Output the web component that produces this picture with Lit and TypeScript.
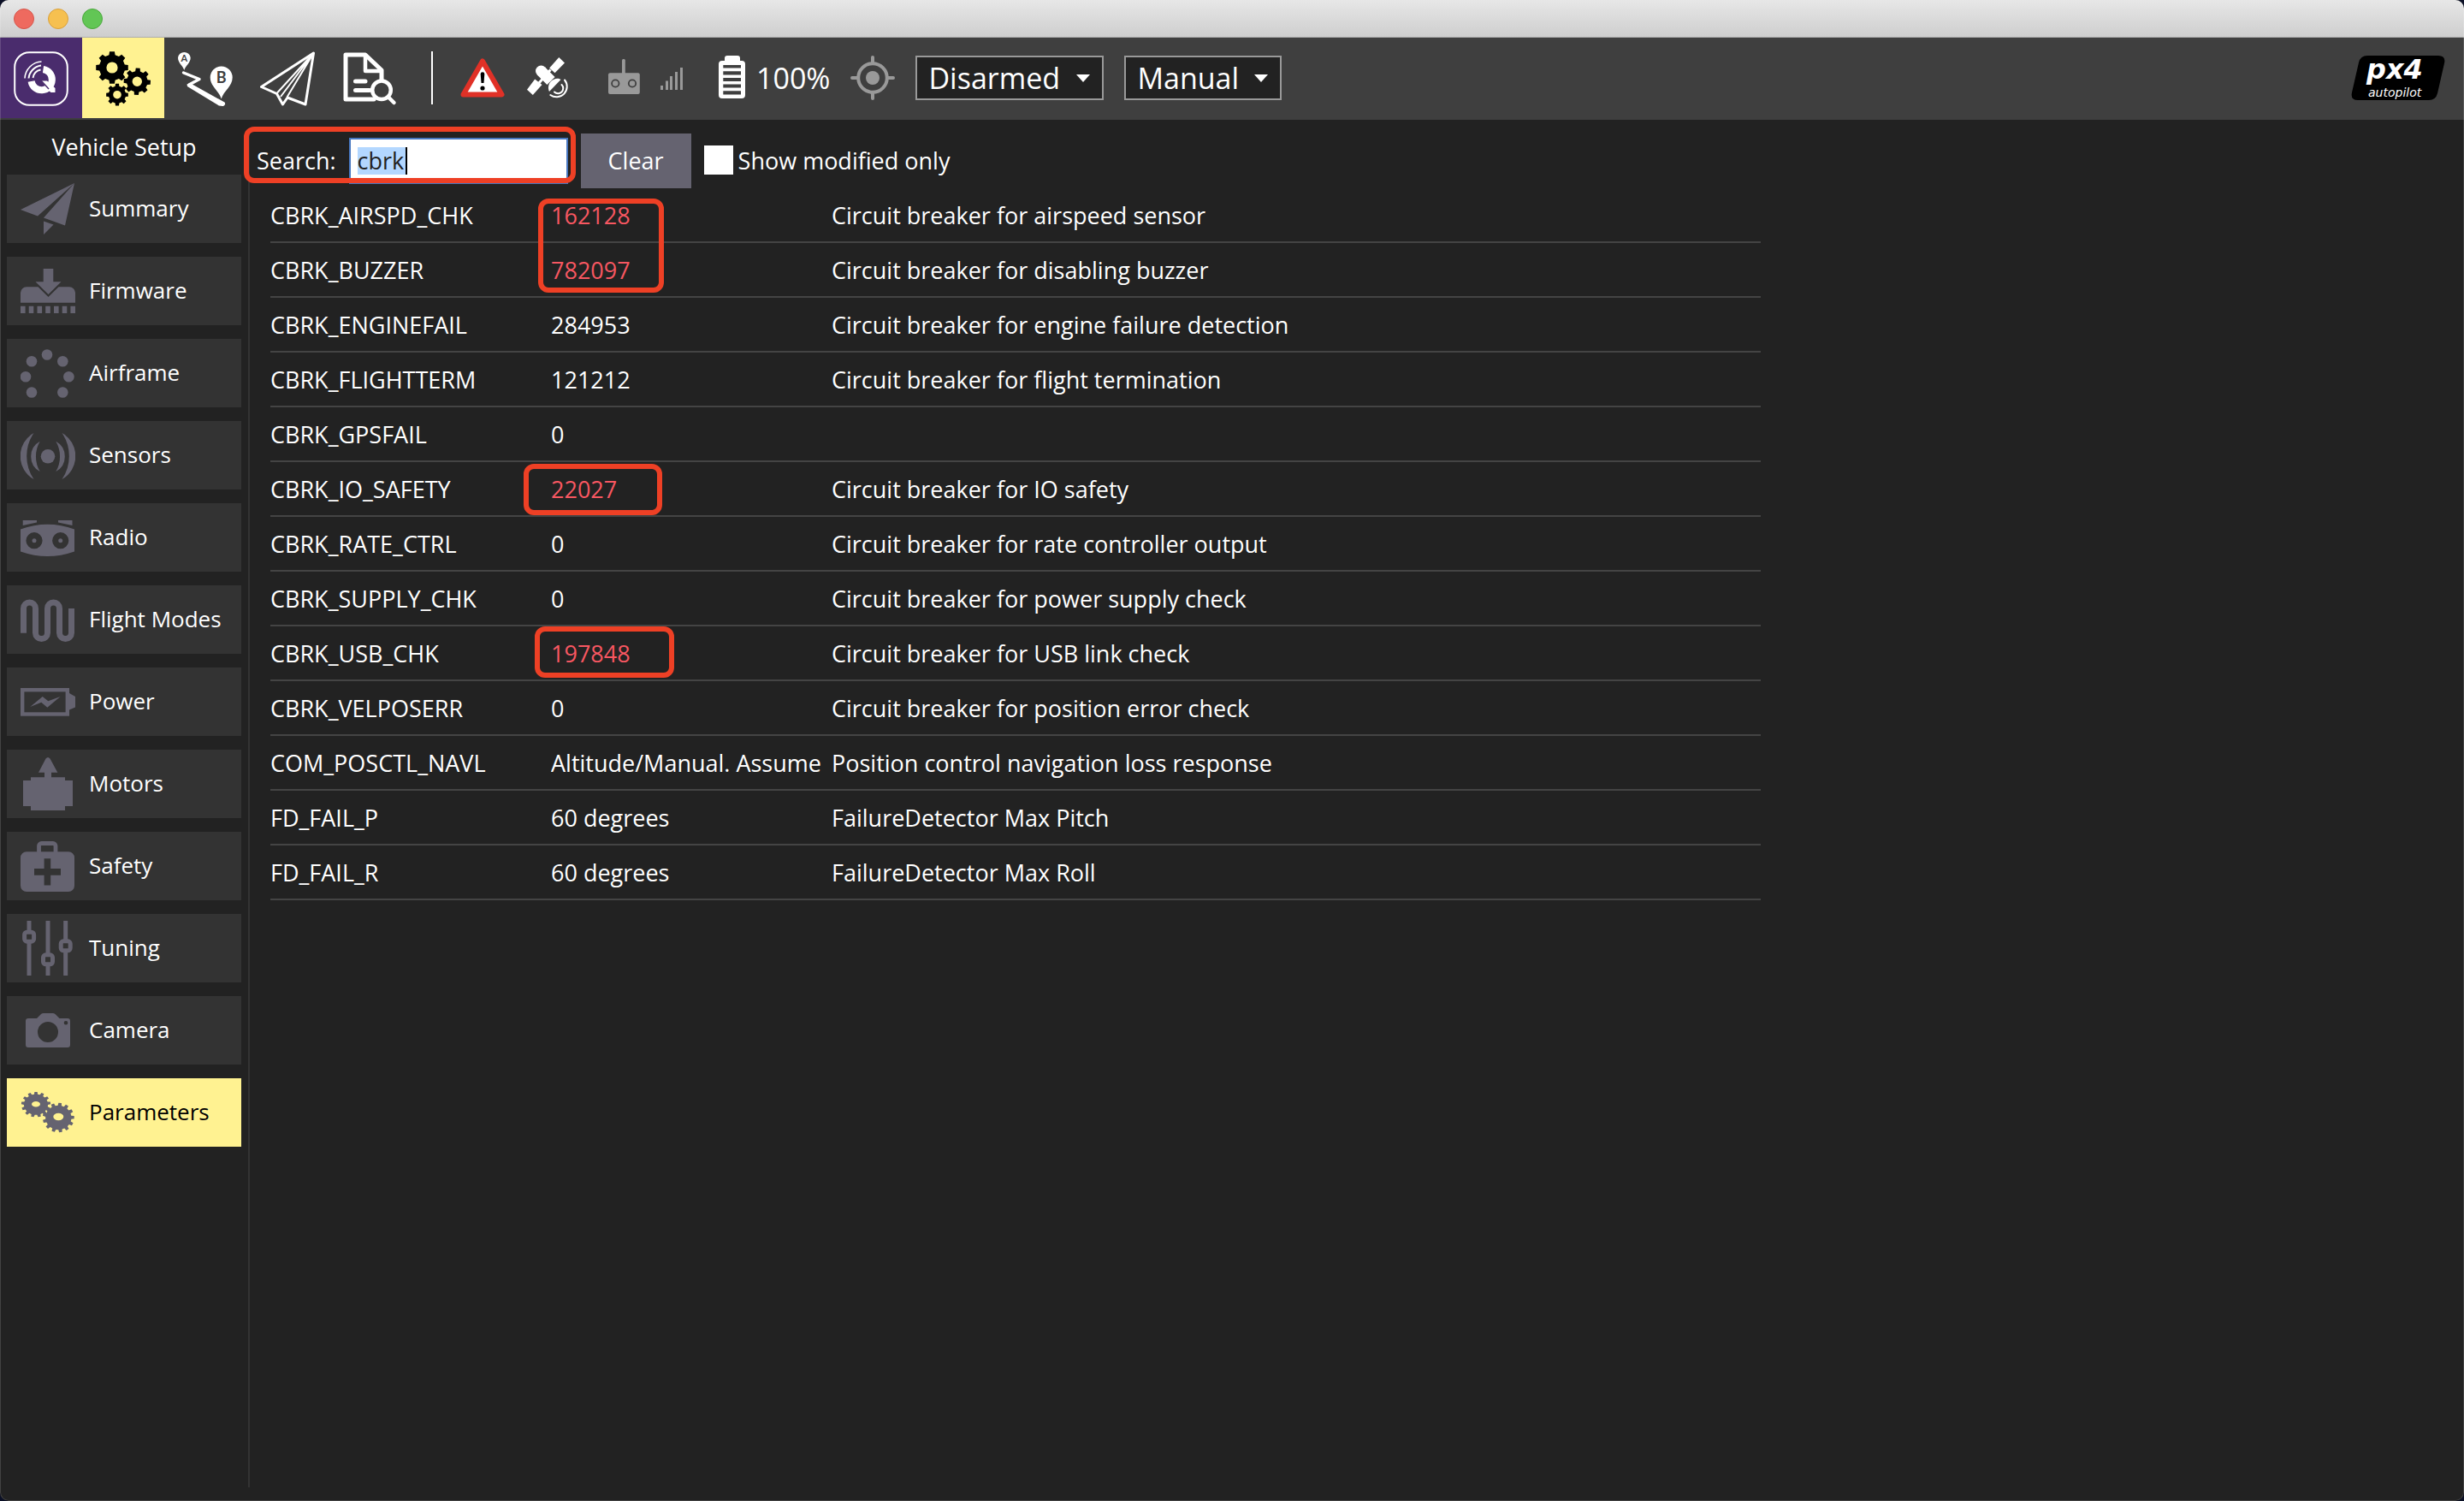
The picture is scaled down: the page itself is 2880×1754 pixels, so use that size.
import { LitElement, html, svg, css, nothing } from "lit";
import type { SVGTemplateResult } from "lit";
import { customElement, property, state } from "lit/decorators.js";
import { classMap } from "lit/directives/class-map.js";

interface Param {
  name: string;
  value: string;
  text: string;
  changed?: boolean;
}

const PARAMS: Param[] = [
  { name: "CBRK_AIRSPD_CHK", value: "162128", text: "Circuit breaker for airspeed sensor", changed: true },
  { name: "CBRK_BUZZER", value: "782097", text: "Circuit breaker for disabling buzzer", changed: true },
  { name: "CBRK_ENGINEFAIL", value: "284953", text: "Circuit breaker for engine failure detection" },
  { name: "CBRK_FLIGHTTERM", value: "121212", text: "Circuit breaker for flight termination" },
  { name: "CBRK_GPSFAIL", value: "0", text: "" },
  { name: "CBRK_IO_SAFETY", value: "22027", text: "Circuit breaker for IO safety", changed: true },
  { name: "CBRK_RATE_CTRL", value: "0", text: "Circuit breaker for rate controller output" },
  { name: "CBRK_SUPPLY_CHK", value: "0", text: "Circuit breaker for power supply check" },
  { name: "CBRK_USB_CHK", value: "197848", text: "Circuit breaker for USB link check", changed: true },
  { name: "CBRK_VELPOSERR", value: "0", text: "Circuit breaker for position error check" },
  { name: "COM_POSCTL_NAVL", value: "Altitude/Manual. Assume", text: "Position control navigation loss response" },
  { name: "FD_FAIL_P", value: "60 degrees", text: "FailureDetector Max Pitch" },
  { name: "FD_FAIL_R", value: "60 degrees", text: "FailureDetector Max Roll" },
];

/** Outline of a cog wheel: flat-topped teeth round an elliptical body. */
function cog(cx: number, cy: number, rx: number, ry: number, teeth: number, root: number, turn = 0): string {
  const pts: string[] = [];
  const step = (Math.PI * 2) / teeth;
  const corners: [number, number][] = [
    [-0.3, root],
    [-0.2, 1],
    [0.2, 1],
    [0.3, root],
  ];
  for (let i = 0; i < teeth; i++) {
    for (const [offset, r] of corners) {
      const a = (i + offset) * step + turn;
      pts.push(`${(cx + rx * r * Math.sin(a)).toFixed(2)} ${(cy - ry * r * Math.cos(a)).toFixed(2)}`);
    }
  }
  return `M${pts.join("L")}Z`;
}

/** Ellipse as a path segment, so that it can be cut out of a filled shape. */
function hole(cx: number, cy: number, rx: number, ry = rx): string {
  return `M${cx - rx} ${cy}a${rx} ${ry} 0 1 0 ${2 * rx} 0a${rx} ${ry} 0 1 0 ${-2 * rx} 0Z`;
}

const ICONS: Record<string, SVGTemplateResult> = {
  qgc: svg`
    <rect x="1.2" y="1.2" width="61.6" height="61.6" rx="17" fill="none" stroke="#fff" stroke-width="2"/>
    <g fill="none" stroke="#fff">
      <path d="M34.500 21A12.200 12.200 0 1 1 20.600 35" stroke-width="8"/>
      <path d="M22.500 31A11.500 11.500 0 0 1 31.500 21.500" stroke-width="1.800"/>
      <path d="M17.500 31.500A17 17 0 0 1 32 16.500" stroke-width="2"/>
      <path d="M13 31.500A20.500 20.500 0 0 1 32.500 12" stroke-width="1.600"/>
    </g>
    <path d="M32.500 34.500H39L48.500 43V48H43.500L40.500 45.500Z" fill="#fff"/>
    <path d="M31.500 33.500L41 44" stroke="#4a2c6d" stroke-width="1.500"/>`,
  setup: svg`
    <path fill-rule="evenodd" d="${cog(19, 19, 19, 19, 8, 0.8) + hole(19, 19, 6.6)}"/>
    <path fill-rule="evenodd" d="${cog(48.3, 35.3, 15.8, 15.8, 8, 0.78, 0.06) + hole(48.3, 35.3, 5.7)}"/>
    <path fill-rule="evenodd" d="${cog(25, 50.7, 13, 13, 8, 0.78) + hole(25, 50.7, 4.8)}"/>`,
  plan: svg`
    <path d="M7.300 22C6 17 0 13.500 0 7.500A7.400 7.400 0 0 1 14.700 7.500C14.700 13.500 8.600 17 7.300 22Z"/>
    <path d="M50.700 55.500C48 46 37.700 41 37.700 30.500A13 13 0 0 1 63.700 30.500C63.700 41 53.400 46 50.700 55.500Z"/>
    <path d="M6.500 25L25 32.500L13 39" fill="none" stroke="#fff" stroke-width="3.400" stroke-linejoin="round" stroke-linecap="round"/>
    <path d="M10.500 38.500L14 37L54.500 59.500A2.800 2.800 0 0 1 52 64L48 63.600L11 41Z"/>
    <text class="pin" x="7.300" y="11.500" font-size="11">A</text>
    <text class="pin" x="50.700" y="37" font-size="18">B</text>`,
  fly: svg`
    <g fill="none" stroke="#fff" stroke-linejoin="round">
      <path stroke-width="3" d="M1.500 41.500L62.500 2L53 62L32 54L26.500 62L19.500 49.500Z"/>
      <path stroke-width="2" d="M62.500 2L20 48.500M62.500 2L24 53M62.500 2L31.500 53.500"/>
    </g>`,
  analyze: svg`
    <g fill="none" stroke="#fff" stroke-linejoin="round" stroke-linecap="round">
      <path stroke-width="5" d="M46 33V22L27 4H4V56H37"/>
      <path stroke-width="4.500" d="M27 5V23H45"/>
      <path stroke-width="5" d="M15.500 35H27M15.500 45.500H32"/>
      <circle stroke-width="4.500" cx="46" cy="45.300" r="10.800"/>
      <path stroke-width="4.500" d="M54 53.500L60.500 60"/>
    </g>`,
  warning: svg`
    <path d="M26 6.500L48.500 45.500H3.500Z" fill="#fff" stroke="#e03127" stroke-width="6" stroke-linejoin="round"/>
    <path d="M23.700 21.500Q23.700 19.300 26 19.300T28.300 21.500L27.500 32H24.500Z" fill="#000"/>
    <circle cx="26" cy="38" r="2.600" fill="#000"/>`,
  satellite: svg`
    <path d="M39.300 2L46 8.500L34.500 20.200L28.200 14.500Z"/>
    <path d="M11.200 27.500L19.500 34L8.800 46L2 39.700Z"/>
    <path d="M29.500 16.500L16 32" stroke="#fff" stroke-width="3"/>
    <path d="M18.500 18L30 29.500" stroke="#fff" stroke-width="13"/>
    <circle cx="18.500" cy="18" r="6.500"/>
    <path d="M41.500 28C38 25.500 33 27 30 30C27 33 26 38 28 42Z"/>
    <g fill="none" stroke="#fff" stroke-width="2" stroke-linecap="round">
      <path d="M42.500 34A6 6 0 0 1 34 42.500"/>
      <path d="M46 28.500A12.200 12.200 0 0 1 29.300 46"/>
    </g>`,
  rc: svg`
    <rect x="17" y="4" width="3.800" height="18" rx="1.500"/>
    <rect x="1" y="20.200" width="36.800" height="24.800" rx="2"/>
    <g fill="none" stroke="#3f3f3f" stroke-width="1.800"><circle cx="9.300" cy="32.500" r="4.200"/><circle cx="29" cy="32.500" r="4.200"/></g>`,
  signal: svg`<path d="M0 35h3v5h-3zM6 29.500h3v10.500h-3zM11 24h3v16h-3zM17 19h3v21h-3zM23 14h3v26h-3z"/>`,
  battery: svg`
    <path fill-rule="evenodd" d="M9 6V3A3 3 0 0 1 12 0H24A3 3 0 0 1 27 3V6H29A4 4 0 0 1 33 10V46A4 4 0 0 1 29 50H6A4 4 0 0 1 2 46V10A4 4 0 0 1 6 6Z
      M7.300 11V14.500H28V11ZM7.300 18.200V22.400H28V18.200ZM7.300 26V30H28V26ZM7.300 33.600V37.600H28V33.600ZM7.300 41.200V45.400H28V41.200Z"/>`,
  gps: svg`
    <circle cx="26" cy="26" r="16.800" fill="none" stroke="#999" stroke-width="4"/>
    <circle cx="26" cy="26" r="8"/>
    <path d="M26 2V9M26 43V50M2 26H9M43 26H50" stroke="#999" stroke-width="4" stroke-linecap="round"/>`,
  summary: svg`<path d="M0 33L63 2L20 40.500ZM63 2L52 51.500L27 42.500ZM27 46.500L38.500 50.500L27 62Z"/>`,
  firmware: svg`
    <path d="M26.700 6H38.300V21.300H47.500L32.500 36L17.500 21.300H26.700Z"/>
    <path d="M0 45.700V34A7 7 0 0 1 7 27.300H20.500L32.500 39L44.500 27.300H57A7 7 0 0 1 64 34V45.700Z"/>
    <path d="M2.800 49.700V58M12.500 49.700V58M22.300 49.700V58M32 49.700V58M41.800 49.700V58M51.500 49.700V58M61.200 49.700V58" stroke="#656370" stroke-width="5.600"/>`,
  airframe: svg`${[
    [31, 10.5], [13, 18.3], [49.3, 18.3], [6, 36.3], [56.4, 36.3], [13, 54.5], [49.3, 54.5],
  ].map(([x, y]) => svg`<circle cx="${x}" cy="${y}" r="6.300"/>`)}`,
  sensors: svg`
    <circle cx="32" cy="33.300" r="8.300"/>
    <path d="M15.500 6A31 31 0 0 0 15.500 60A48 48 0 0 1 15.500 6ZM22.700 15.800A20 20 0 0 0 22.700 51A35 35 0 0 1 22.700 15.800Z"/>
    <path d="M48.500 6A31 31 0 0 1 48.500 60A48 48 0 0 0 48.500 6ZM41.300 15.800A20 20 0 0 1 41.300 51A35 35 0 0 0 41.300 15.800Z"/>`,
  radio: svg`
    <path d="M2.700 12H19V14.500L2.700 18ZM60.500 12H44V14.500L60.500 18Z"/>
    <path fill-rule="evenodd" d="${"M0 22.500Q31.500 11 63 22.500V48.500Q31.500 59.500 0 48.500Z" + hole(16, 35.7, 9.6) + hole(46.7, 35.7, 9.6)}"/>
    <circle cx="16" cy="35.700" r="2.500"/><circle cx="46.700" cy="35.700" r="2.500"/>`,
  modes: svg`<path fill="none" stroke="#656370" stroke-width="7" d="M3.500 47.800V19a7 7 0 0 1 14 0V47.500a7 7 0 0 0 14 0V19a7 7 0 0 1 14 0V47.500a7 7 0 0 0 14 0V19"/>`,
  power: svg`
    <rect x="2.200" y="18.200" width="52.600" height="28.300" fill="none" stroke="#656370" stroke-width="4.400"/>
    <path d="M57 22L64 26V38.500L57 41.500ZM11.300 38L25.700 26L32.300 31.300L46.500 26L31.300 38.700L24.300 32.700Z"/>`,
  motors: svg`<path d="M29.500 2.500Q32 -.5 34.500 2.500L43.300 18.700H36V24.300H52V28H61V58H52V63H12V58H3V28H12V24.300H28V18.700H21Z"/>`,
  safety: svg`
    <path d="M21.500 17V8.500A3 3 0 0 1 24.500 5.500H38A3 3 0 0 1 41 8.500V17" fill="none" stroke="#656370" stroke-width="4.800"/>
    <path fill-rule="evenodd" d="M7 15.300H56A7 7 0 0 1 63 22.300V55A7 7 0 0 1 56 62H7A7 7 0 0 1 0 55V22.300A7 7 0 0 1 7 15.300Z
      M27.600 23.300V35H16V42.800H27.600V54.500H35.200V42.800H47V35H35.200V23.300Z"/>`,
  tuning: svg`
    <path d="M10 0V12M10 25V64M32 0V39M32 52V64M52.700 0V23M52.700 36V64" stroke="#656370" stroke-width="5"/>
    <g fill="none" stroke="#656370" stroke-width="5">
      <rect x="4.600" y="13.200" width="11" height="11" rx="3"/>
      <rect x="26.500" y="39.800" width="11" height="11" rx="3"/>
      <rect x="47.200" y="23.800" width="11" height="11" rx="3"/>
    </g>`,
  camera: svg`<path fill-rule="evenodd" d="${"M9 18H19L24 13Q25 12 27 12H37.500Q39.500 12 40.500 13L45.500 18H55A3 3 0 0 1 58 21V49A3 3 0 0 1 55 52H9A3 3 0 0 1 6 49V21A3 3 0 0 1 9 18Z" + hole(32, 34, 12) + hole(53, 23.3, 2.3)}"/>`,
  parameters: svg`
    <path fill-rule="evenodd" d="${cog(18, 22.7, 17.2, 14.8, 13, 0.82) + hole(18, 22.2, 5, 3.2)}"/>
    <path fill-rule="evenodd" d="${cog(44.3, 38, 18.5, 17.3, 13, 0.82, 0.1) + hole(44.3, 37, 6, 4.2)}"/>`,
};

@customElement("qgc-icon")
export class QgcIcon extends LitElement {
  @property() name = "";
  @property({ type: Number }) w = 64;
  @property({ type: Number }) h = 64;

  static styles = css`
    :host { display: block; flex: none; line-height: 0; }
    svg { display: block; fill: currentColor; }
    .pin {
      font-family: Lato, "Open Sans", sans-serif;
      font-weight: 700;
      text-anchor: middle;
      fill: #3f3f3f;
    }
  `;

  render() {
    return html`<svg width=${this.w} height=${this.h} viewBox="0 0 ${this.w} ${this.h}" aria-hidden="true">
      ${ICONS[this.name] ?? nothing}
    </svg>`;
  }
}

@customElement("qgc-toolbar")
export class QgcToolbar extends LitElement {
  static styles = css`
    :host {
      display: flex;
      align-items: center;
      height: 96px;
      padding: 0 22px 2px 0;
      box-sizing: border-box;
      background: #3f3f3f;
      color: #fff;
      font-size: 34px;
    }
    .views { display: flex; align-self: stretch; }
    .view {
      width: 96px;
      margin: 0;
      padding: 2px 16px 0;
      border: 0;
      background: none;
      color: #fff;
    }
    .view.brand { background: #4a2c6d; }
    .view.current { background: #fff291; color: #000; }
    .rule { width: 2px; height: 62px; margin: 0 32px 0 24px; background: #fff; }
    .status { display: flex; align-items: center; gap: 24px; flex: 1; }
    .link { display: flex; gap: 24px; padding-left: 20px; color: #999; }
    .cell { display: flex; align-items: center; gap: 8px; padding-left: 16px; }
    .dim { color: #999; }
    .drop { display: grid; align-items: center; }
    .drop > * { grid-area: 1 / 1; }
    .drop svg { justify-self: end; margin-right: 16px; pointer-events: none; }
    select {
      appearance: none;
      height: 52px;
      margin: 0;
      padding: 0 40px 0 13px;
      border: 2px solid #999;
      border-radius: 0;
      background: #222;
      color: #fff;
      font: inherit;
    }
    .arm { width: 220px; }
    .mode { width: 184px; }
    .logo-name { font: italic 700 32px "DejaVu Sans", sans-serif; }
    .logo-sub { font: italic 400 14px "DejaVu Sans", sans-serif; }
  `;

  private drop(label: string, kind: string, options: string[]) {
    return html`<div class="drop">
      <select class=${kind} aria-label=${label}>
        ${options.map((o) => html`<option>${o}</option>`)}
      </select>
      <svg width="16" height="10" viewBox="0 0 16 10" aria-hidden="true"><path d="M0 1H16L8 10Z" fill="#fff" /></svg>
    </div>`;
  }

  render() {
    return html`
      <nav class="views">
        <button class="view brand" aria-label="Application settings"><qgc-icon name="qgc"></qgc-icon></button>
        <button class="view current" aria-label="Vehicle setup"><qgc-icon name="setup"></qgc-icon></button>
        <button class="view" aria-label="Plan"><qgc-icon name="plan"></qgc-icon></button>
        <button class="view" aria-label="Fly"><qgc-icon name="fly"></qgc-icon></button>
        <button class="view" aria-label="Analyze"><qgc-icon name="analyze"></qgc-icon></button>
      </nav>
      <div class="rule"></div>
      <div class="status">
        <qgc-icon name="warning" w="52" h="52"></qgc-icon>
        <qgc-icon name="satellite" w="52" h="52"></qgc-icon>
        <div class="link">
          <qgc-icon name="rc" w="38" h="52"></qgc-icon>
          <qgc-icon name="signal" w="26" h="52"></qgc-icon>
        </div>
        <div class="cell"><qgc-icon name="battery" w="38" h="52"></qgc-icon><span>100%</span></div>
        <qgc-icon class="dim" name="gps" w="52" h="52"></qgc-icon>
        ${this.drop("Arm state", "arm", ["Disarmed", "Armed"])}
        ${this.drop("Flight mode", "mode", ["Manual", "Position", "Mission"])}
      </div>
      <svg width="110" height="62" viewBox="0 -4 110 62" role="img" aria-label="PX4 autopilot">
        <path d="M19 1H102Q111 1 109 10L101 45Q99 53 91 53H8Q-1 53 1 44L9 9Q11 1 19 1Z" fill="#000" />
        <text class="logo-name" x="18" y="28" fill="#fff">px4</text>
        <text class="logo-sub" x="20" y="49" fill="#fff">autopilot</text>
      </svg>
    `;
  }
}

@customElement("qgc-sidebar")
export class QgcSidebar extends LitElement {
  private items: [string, string][] = [
    ["summary", "Summary"],
    ["firmware", "Firmware"],
    ["airframe", "Airframe"],
    ["sensors", "Sensors"],
    ["radio", "Radio"],
    ["modes", "Flight Modes"],
    ["power", "Power"],
    ["motors", "Motors"],
    ["safety", "Safety"],
    ["tuning", "Tuning"],
    ["camera", "Camera"],
    ["parameters", "Parameters"],
  ];

  @state() private current = "parameters";

  static styles = css`
    :host { display: block; width: 274px; padding: 0 8px; flex: none; }
    h1 {
      margin: 0;
      line-height: 64px;
      font-size: 27px;
      font-weight: 400;
      text-align: center;
    }
    nav { display: flex; flex-direction: column; gap: 16px; }
    button {
      display: flex;
      align-items: center;
      gap: 16px;
      height: 80px;
      margin: 0;
      padding: 0 0 0 16px;
      border: 0;
      background: #333;
      color: #fff;
      font: inherit;
      font-size: 26px;
      text-align: left;
      white-space: nowrap;
    }
    button.current { background: #fff291; color: #000; }
    qgc-icon { color: #656370; }
    span { padding-bottom: 2px; }
  `;

  render() {
    return html`
      <h1>Vehicle Setup</h1>
      <nav>
        ${this.items.map(
          ([id, label]) => html`<button
            class=${classMap({ current: id === this.current })}
            @click=${() => (this.current = id)}
          ><qgc-icon name=${id}></qgc-icon><span>${label}</span></button>`,
        )}
      </nav>
    `;
  }
}

@customElement("qgc-parameters")
export class QgcParameters extends LitElement {
  static styles = css`
    :host { display: block; position: relative; flex: 1; min-width: 0; padding: 16px 8px 0; font-size: 27px; }
    .filter { display: flex; align-items: center; gap: 15px; height: 64px; }
    .filter label { padding-bottom: 2px; }
    .query {
      width: 256px;
      height: 54px;
      box-sizing: border-box;
      margin: 0;
      padding: 0 8px 2px;
      border: 2px solid #4777c0;
      border-radius: 0;
      outline: none;
      color: #222;
      font: inherit;
      background:
        linear-gradient(#000, #000) 64px 50% / 2px 32px no-repeat,
        linear-gradient(#b3d7ff, #b3d7ff) 8px 50% / 56px 32px no-repeat,
        #fff;
    }
    .clear {
      align-self: stretch;
      width: 129px;
      margin: 0;
      padding: 0 0 2px;
      border: 0;
      background: #656370;
      color: #fff;
      font: inherit;
    }
    .modified { display: flex; align-items: center; gap: 6px; }
    .modified input { appearance: none; width: 34px; height: 34px; margin: 0; background: #fff; }
    .modified input:checked { background: #656370; border: 6px solid #fff; }
    table {
      width: 100%;
      max-width: 1742px;
      margin-left: 16px;
      border-spacing: 0;
      table-layout: fixed;
    }
    .col { width: 328px; }
    th, td {
      height: 64px;
      box-sizing: border-box;
      padding: 0;
      border-bottom: 2px solid #444;
      font-weight: 400;
      text-align: left;
      white-space: nowrap;
      overflow: hidden;
    }
    .changed { color: #f85761; }
    .mark {
      position: absolute;
      box-sizing: border-box;
      border: 6px solid #ee4025;
      border-radius: 12px;
      pointer-events: none;
    }
    .mark-search { left: -7px; top: 8px; width: 388px; height: 66px; }
    .mark-first { left: 337px; top: 92px; width: 147px; height: 110px; }
    .mark-io { left: 320px; top: 402px; width: 162px; height: 60px; }
    .mark-usb { left: 333px; top: 592px; width: 163px; height: 60px; }
  `;

  render() {
    return html`
      <div class="filter">
        <label for="query">Search:</label>
        <input id="query" class="query" type="text" value="cbrk" spellcheck="false" />
        <button class="clear">Clear</button>
        <label class="modified"><input type="checkbox" />Show modified only</label>
      </div>
      <table>
        <colgroup><col class="col" /><col class="col" /><col /></colgroup>
        <tbody>
          ${PARAMS.map(
            (p) => html`<tr>
              <th scope="row">${p.name}</th>
              <td class=${classMap({ changed: !!p.changed })}>${p.value}</td>
              <td>${p.text}</td>
            </tr>`,
          )}
        </tbody>
      </table>
      <div class="mark mark-search"></div>
      <div class="mark mark-first"></div>
      <div class="mark mark-io"></div>
      <div class="mark mark-usb"></div>
    `;
  }
}

@customElement("app-root")
export class AppRoot extends LitElement {
  static styles = css`
    :host {
      display: block;
      background: #0b1026;
      color: #fff;
      font-family: "Open Sans", "Noto Sans", sans-serif;
    }
    .window {
      position: relative;
      display: flex;
      flex-direction: column;
      min-height: 100vh;
      border-radius: 10px;
      overflow: hidden;
      background: #222;
    }
    .window::after {
      content: "";
      position: absolute;
      inset: 0;
      border: solid rgba(255, 255, 255, 0.15);
      border-width: 0 1px 1px;
      border-radius: 10px;
      pointer-events: none;
    }
    .title {
      display: flex;
      align-items: center;
      gap: 16px;
      height: 44px;
      box-sizing: border-box;
      padding: 0 16px;
      border-bottom: 1px solid #adadad;
      background: linear-gradient(#e7e7e7, #cecece);
    }
    .light { width: 24px; height: 24px; box-sizing: border-box; border-radius: 50%; border: 1px solid; }
    .close { background: #ee6a5f; border-color: #d5554a; }
    .minimize { background: #f6c050; border-color: #d9a03c; }
    .zoom { background: #62c655; border-color: #4aa73c; }
    .body { display: flex; flex: 1; }
    .divider { width: 2px; margin: 16px 0; background: #333; flex: none; }
  `;

  render() {
    return html`
      <div class="window">
        <div class="title">
          <span class="light close"></span>
          <span class="light minimize"></span>
          <span class="light zoom"></span>
        </div>
        <qgc-toolbar></qgc-toolbar>
        <div class="body">
          <qgc-sidebar></qgc-sidebar>
          <div class="divider"></div>
          <qgc-parameters></qgc-parameters>
        </div>
      </div>
    `;
  }
}
